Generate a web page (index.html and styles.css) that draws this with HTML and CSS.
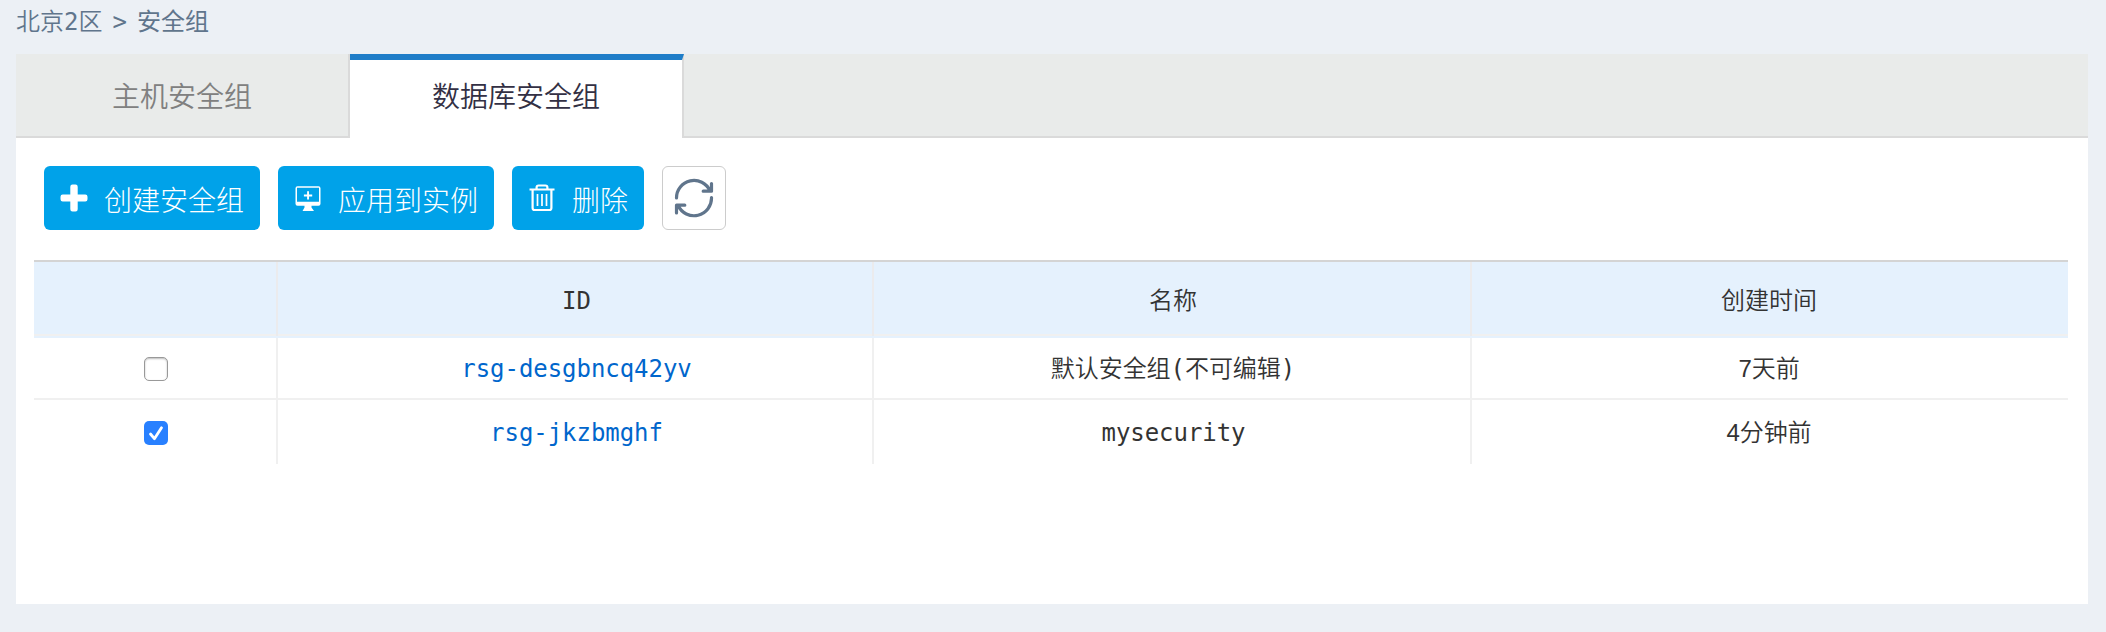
FILE: index.html
```html
<!DOCTYPE html>
<html lang="zh-CN">
<head>
<meta charset="utf-8">
<title>安全组</title>
<link rel="stylesheet" href="styles.css">
</head>
<body>
<nav class="breadcrumb"><span>北京2区</span><span class="sep">&gt;</span><span class="current">安全组</span></nav>
<main class="panel">
  <div class="tabs">
    <div class="tab">主机安全组</div>
    <div class="tab active">数据库安全组</div>
    <div class="tabs-rest"></div>
  </div>
  <div class="toolbar">
    <button class="btn">
      <svg class="icon" viewBox="0 0 28 28"><path d="M12.500.5h3q2.200 0 2.200 2.200v7.800h7.600q2.200 0 2.200 2.200v2.600q0 2.200-2.200 2.200h-7.600v7.800q0 2.200-2.200 2.200h-3q-2.200 0-2.200-2.200v-7.800H2.700q-2.200 0-2.200-2.200v-2.600q0-2.200 2.200-2.200h7.600V2.700q0-2.200 2.200-2.200z" fill="#fff"/></svg>
      <span>创建安全组</span>
    </button>
    <button class="btn">
      <svg class="icon" viewBox="0 0 28 28"><path d="M3.500 2.300h21a2 2 0 0 1 2 2v15.400a2 2 0 0 1-2 2h-21a2 2 0 0 1-2-2V4.300a2 2 0 0 1 2-2zm-.5 1.500v14h22v-14zM10.500 21.700h7v1.800l2.500 3.500H8.500l2-3.500zM13.100 7.300h1.900v3.200h3.200v1.900H15v3.200h-1.900v-3.200H9.900v-1.900h3.200z" fill="#fff" fill-rule="evenodd"/></svg>
      <span>应用到实例</span>
    </button>
    <button class="btn">
      <svg class="icon" viewBox="0 0 28 28" fill="none" stroke="#fff"><path d="M1.500 5.500h25M8.600 5V3.500a2 2 0 0 1 2-2h6.800a2 2 0 0 1 2 2V5M4.600 6v18a2 2 0 0 0 2 2h14.800a2 2 0 0 0 2-2V6" stroke-width="2.200"/><path d="M9.500 10v12M14 10v12M18.500 10v12" stroke-width="1.700"/></svg>
      <span>删除</span>
    </button>
    <button class="btn-refresh" aria-label="刷新">
      <svg class="icon-refresh" viewBox="0 0 40 40" fill="none" stroke="#60758c" stroke-width="3.200" stroke-linecap="round" stroke-linejoin="round"><path d="M2.500 20A17.500 17.500 0 0 1 35.900 12.600M37.500 5.500v7.700h-8.300M37.500 19.500A17.500 17.500 0 0 1 4.100 27.500M2.500 35v-7.800h8.300"/></svg>
    </button>
  </div>
  <div class="table">
    <div class="row head"><div class="cell id">ID</div><div class="cell name">名称</div><div class="cell time">创建时间</div></div>
    <div class="row">
      <div class="cell pick"><span class="check"></span></div>
      <div class="cell id"><a class="link">rsg-desgbncq42yv</a></div>
      <div class="cell name">默认安全组(不可编辑)</div>
      <div class="cell time">7天前</div>
    </div>
    <div class="row last">
      <div class="cell pick"><span class="check checked"><svg viewBox="0 0 24 24"><path d="M6.500 13l3.900 4.700L17.500 6.800" fill="none" stroke="#fff" stroke-width="2.800" stroke-linecap="round" stroke-linejoin="round"/></svg></span></div>
      <div class="cell id"><a class="link">rsg-jkzbmghf</a></div>
      <div class="cell id">mysecurity</div>
      <div class="cell time">4分钟前</div>
    </div>
  </div>
</main>
</body>
</html>
```
FILE: styles.css
```css
* { box-sizing: border-box; }
body {
  margin: 0;
  height: 632px;
  padding: 0 18px 28px 16px;
  background: #ecf0f5;
  font-family: "DejaVu Sans Mono", "Noto Sans CJK SC", monospace;
  font-size: 24px;
  font-weight: 350;
  color: #333;
  overflow: hidden;
}
.breadcrumb {
  display: flex;
  align-items: center;
  gap: 10px;
  height: 54px;
  padding-bottom: 11px;
  line-height: 36px;
  color: #60758c;
}
.breadcrumb .current { font-weight: 400; }
.panel { height: 550px; background: #fff; }
.tabs { display: flex; height: 84px; font-size: 28px; }
.tab {
  display: flex;
  align-items: center;
  justify-content: center;
  width: 334px;
  background: #e9ebea;
  border-right: 2px solid #dadada;
  border-bottom: 2px solid #dadada;
  color: #808080;
}
.tab.active {
  background: #fff;
  color: #333044;
  border-top: 6px solid #1f7dc8;
  border-bottom: 0;
  padding-bottom: 8px;
}
.tabs-rest { flex: 1; background: #e9ebea; border-bottom: 2px solid #dadada; }
.toolbar { display: flex; gap: 18px; padding: 28px 28px 30px; }
.btn {
  display: flex;
  align-items: center;
  gap: 16px;
  height: 64px;
  padding: 0 16px;
  border: 0;
  border-radius: 6px;
  background: #00a2e9;
  color: #fff;
  font: inherit;
  font-size: 28px;
  font-weight: 300;
}
.btn span { padding-top: 2px; }
.icon { width: 28px; height: 28px; }
.btn-refresh {
  display: flex;
  align-items: center;
  justify-content: center;
  width: 64px;
  height: 64px;
  padding: 0;
  border: 1px solid #ccc;
  border-radius: 6px;
  background: #fff;
}
.icon-refresh { width: 40px; height: 40px; }
.table { margin: 0 20px 0 18px; border-top: 2px solid #d4d4d4; }
.row {
  display: grid;
  grid-template-columns: 244px 596px 598px 596px;
  height: 62px;
  border-bottom: 2px solid #f0f0f0;
}
.row.last { height: 64px; border-bottom: 0; }
.row.head {
  height: 76px;
  background: #e5f1fd;
  box-shadow: inset 0 -2px #f0f0f0;
  border-bottom: 2px solid #e5f1fd;
}
.row.head::before { content: ""; border-right: 2px solid #ebebed; }
.cell {
  display: flex;
  align-items: center;
  justify-content: center;
  border-right: 2px solid #f0f0f0;
  letter-spacing: -0.05px;
}
.cell:last-child { border-right: 0; }
.pick { padding: 2px 0 0 2px; }
.id { padding: 2px 0 0 3px; }
.name { padding: 0 0 3px 2px; }
.time { padding: 0 2px 3px 0; font-family: "Liberation Sans", "Noto Sans CJK SC", sans-serif; }
.row.head .cell { border-color: #ebebed; padding-bottom: 2px; }
.row.head .id { padding-top: 6px; }
.link { color: #0066cc; }
.check {
  display: block;
  width: 24px;
  height: 24px;
  border: 1px solid #999;
  border-radius: 5px;
  box-shadow: inset 0 1px 2px #bbb;
}
.check.checked { border: 0; background: #2880ff; box-shadow: none; }
.check svg { display: block; width: 24px; height: 24px; }
```
